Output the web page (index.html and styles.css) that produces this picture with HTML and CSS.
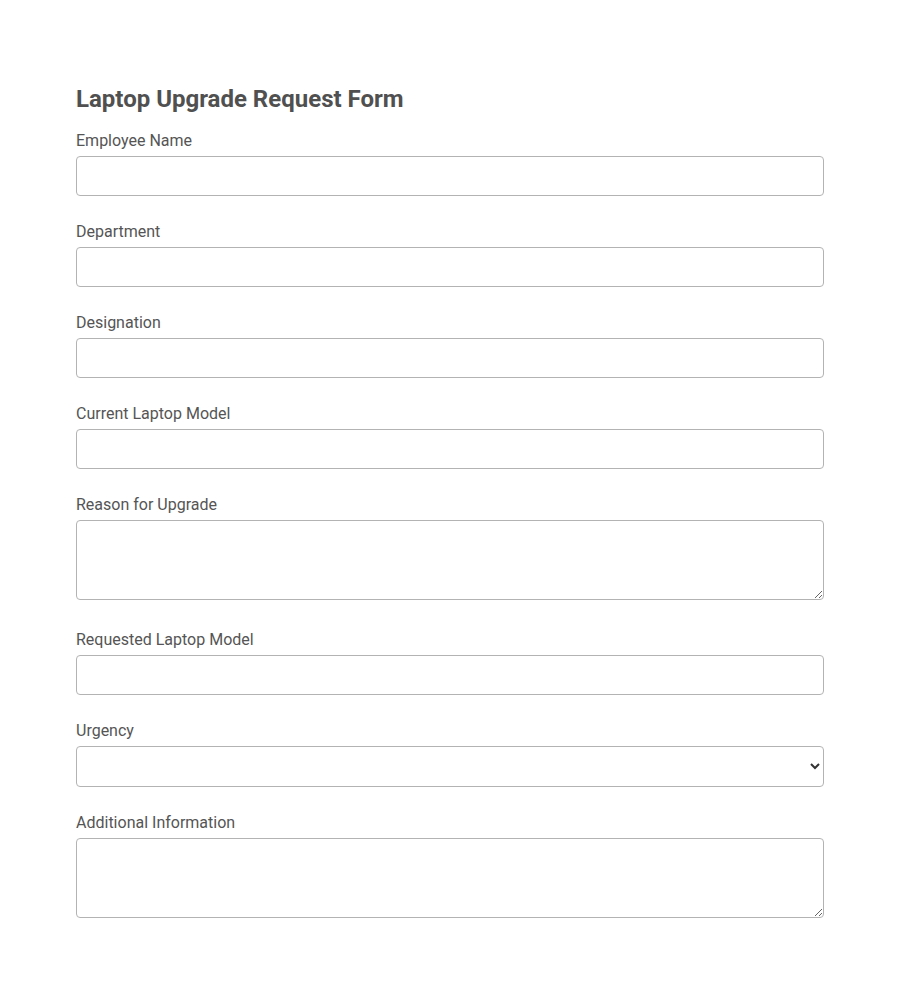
FILE: index.html
```html
<!DOCTYPE html>
<html lang="en">
<head>
<meta charset="utf-8">
<title>Laptop Upgrade Request Form</title>
<link rel="stylesheet" href="styles.css">
</head>
<body>
<div class="container">
  <h2 class="title">Laptop Upgrade Request Form</h2>
  <form class="form">
    <div class="group">
      <label class="label" for="name">Employee Name</label>
      <input class="field" id="name" type="text">
    </div>
    <div class="group">
      <label class="label" for="dept">Department</label>
      <input class="field" id="dept" type="text">
    </div>
    <div class="group">
      <label class="label" for="desig">Designation</label>
      <input class="field" id="desig" type="text">
    </div>
    <div class="group">
      <label class="label" for="current">Current Laptop Model</label>
      <input class="field" id="current" type="text">
    </div>
    <div class="group">
      <label class="label" for="reason">Reason for Upgrade</label>
      <textarea class="area" id="reason"></textarea>
    </div>
    <div class="group">
      <label class="label" for="requested">Requested Laptop Model</label>
      <input class="field" id="requested" type="text">
    </div>
    <div class="group">
      <label class="label" for="urgency">Urgency</label>
      <select class="field select" id="urgency">
        <option value=""></option>
        <option>Low</option>
        <option>Medium</option>
        <option>High</option>
      </select>
    </div>
    <div class="group">
      <label class="label" for="info">Additional Information</label>
      <textarea class="area" id="info"></textarea>
    </div>
  </form>
</div>
</body>
</html>
```
FILE: styles.css
```css
html, body {
  margin: 0;
  padding: 0;
  background: #ffffff;
}
body {
  font-family: Roboto, "Liberation Sans", Arial, sans-serif;
  color: #555555;
}
.container {
  width: 748px;
  margin: 0 auto;
  padding-top: 85px;
}
.title {
  margin: 0 0 18px 0;
  font-size: 24px;
  line-height: 28px;
  font-weight: 700;
  color: #505050;
}
.form {
  margin: 0;
}
.group {
  margin-bottom: 26px;
}
.label {
  display: block;
  font-size: 16px;
  line-height: 19px;
  margin-bottom: 6px;
  color: #555555;
}
.field {
  display: block;
  width: 100%;
  height: 40px;
  box-sizing: border-box;
  border: 1px solid #b3b3b3;
  border-radius: 4px;
  padding: 8px 10px;
  font-family: inherit;
  font-size: 16px;
  background: #ffffff;
  color: #333;
  margin: 0;
}
.select {
  height: 41px;
}
.area {
  width: 100%;
  height: 80px;
  box-sizing: border-box;
  border: 1px solid #b3b3b3;
  border-radius: 4px;
  padding: 8px 10px;
  font-family: inherit;
  font-size: 16px;
  margin: 0;
  vertical-align: baseline;
}
```
